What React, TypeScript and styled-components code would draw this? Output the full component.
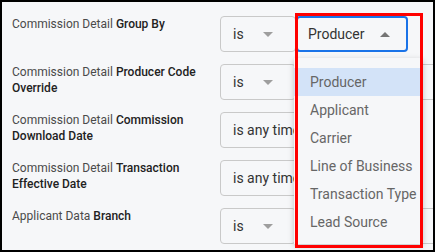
import React from "react";
import styled, { createGlobalStyle } from "styled-components";

const GlobalStyle = createGlobalStyle`
  body {
    margin: 0;
    font-family: Roboto, "Liberation Sans", sans-serif;
  }
`;

const Frame = styled.div`
  position: relative;
  box-sizing: border-box;
  width: 435px;
  height: 252px;
  border: 2px solid #000;
  background: #f6f7f9;
  overflow: hidden;
  padding: 14px 0 0 10px;
  display: flex;
  flex-direction: column;
  gap: 12px;
`;

const Row = styled.div`
  display: flex;
  align-items: flex-start;
  height: 36px;
`;

const Label = styled.div`
  width: 198px;
  margin-right: 10px;
  flex-shrink: 0;
  font-size: 12px;
  line-height: 16px;
  color: #4a4a4a;

  b {
    font-weight: 500;
    color: #222;
  }
`;

const Controls = styled.div`
  display: flex;
  flex-shrink: 0;
`;

const Select = styled.div<{ $width: number; $focused?: boolean }>`
  position: ${(p) => (p.$focused ? "relative" : "static")};
  z-index: ${(p) => (p.$focused ? 2 : "auto")};
  box-sizing: border-box;
  width: ${(p) => p.$width}px;
  height: 36px;
  flex-shrink: 0;
  display: flex;
  align-items: center;
  justify-content: space-between;
  padding: 0 ${(p) => (p.$focused ? 16 : 22)}px 0 ${(p) => (p.$focused ? 10 : 12)}px;
  border: ${(p) => (p.$focused ? "2px solid #1a73e8" : "1px solid #c9c9c9")};
  border-radius: 4px;
  font-size: 14px;
  color: #333;
  white-space: nowrap;
`;

const Caret = styled.span<{ $up?: boolean }>`
  width: 0;
  height: 0;
  border-left: 5px solid transparent;
  border-right: 5px solid transparent;
  ${(p) =>
    p.$up ? "border-bottom: 5px solid #757575;" : "border-top: 5px solid #9e9e9e;"}
`;

const Menu = styled.div`
  position: absolute;
  top: 40px;
  left: -4px;
  width: 129px;
  box-sizing: border-box;
  padding: 10px 0 8px;
  background: #f6f7f9;
  box-shadow: 0 2px 6px rgba(0, 0, 0, 0.22);
  z-index: 10;
`;

const MenuItem = styled.div<{ $active?: boolean }>`
  height: 28px;
  line-height: 28px;
  padding-left: 16px;
  font-size: 14px;
  color: #666;
  white-space: nowrap;
  background: ${(p) => (p.$active ? "#d3e3f8" : "transparent")};
`;

const Annotation = styled.div`
  position: absolute;
  left: 293px;
  top: 11px;
  width: 128px;
  height: 235px;
  box-sizing: border-box;
  border: 3px solid #ff0000;
  z-index: 20;
  pointer-events: none;
`;

const options = [
  "Producer",
  "Applicant",
  "Carrier",
  "Line of Business",
  "Transaction Type",
  "Lead Source",
];

export default function App() {
  return (
    <>
      <GlobalStyle />
      <Frame>
        <Row>
          <Label>
            Commission Detail <b>Group By</b>
          </Label>
          <Controls>
            <Select $width={76}>
              is <Caret />
            </Select>
            <Select $width={112} $focused>
              Producer <Caret $up />
              <Menu>
                {options.map((o, i) => (
                  <MenuItem key={o} $active={i === 0}>
                    {o}
                  </MenuItem>
                ))}
              </Menu>
            </Select>
          </Controls>
        </Row>
        <Row>
          <Label>
            Commission Detail <b>Producer Code Override</b>
          </Label>
          <Controls>
            <Select $width={76}>
              is <Caret />
            </Select>
            <Select $width={160} />
          </Controls>
        </Row>
        <Row>
          <Label>
            Commission Detail <b>Commission Download Date</b>
          </Label>
          <Controls>
            <Select $width={200}>
              is any time <Caret />
            </Select>
          </Controls>
        </Row>
        <Row>
          <Label>
            Commission Detail <b>Transaction Effective Date</b>
          </Label>
          <Controls>
            <Select $width={200}>
              is any time <Caret />
            </Select>
          </Controls>
        </Row>
        <Row>
          <Label>
            Applicant Data <b>Branch</b>
          </Label>
          <Controls>
            <Select $width={76}>
              is <Caret />
            </Select>
            <Select $width={160} />
          </Controls>
        </Row>
        <Annotation />
      </Frame>
    </>
  );
}
